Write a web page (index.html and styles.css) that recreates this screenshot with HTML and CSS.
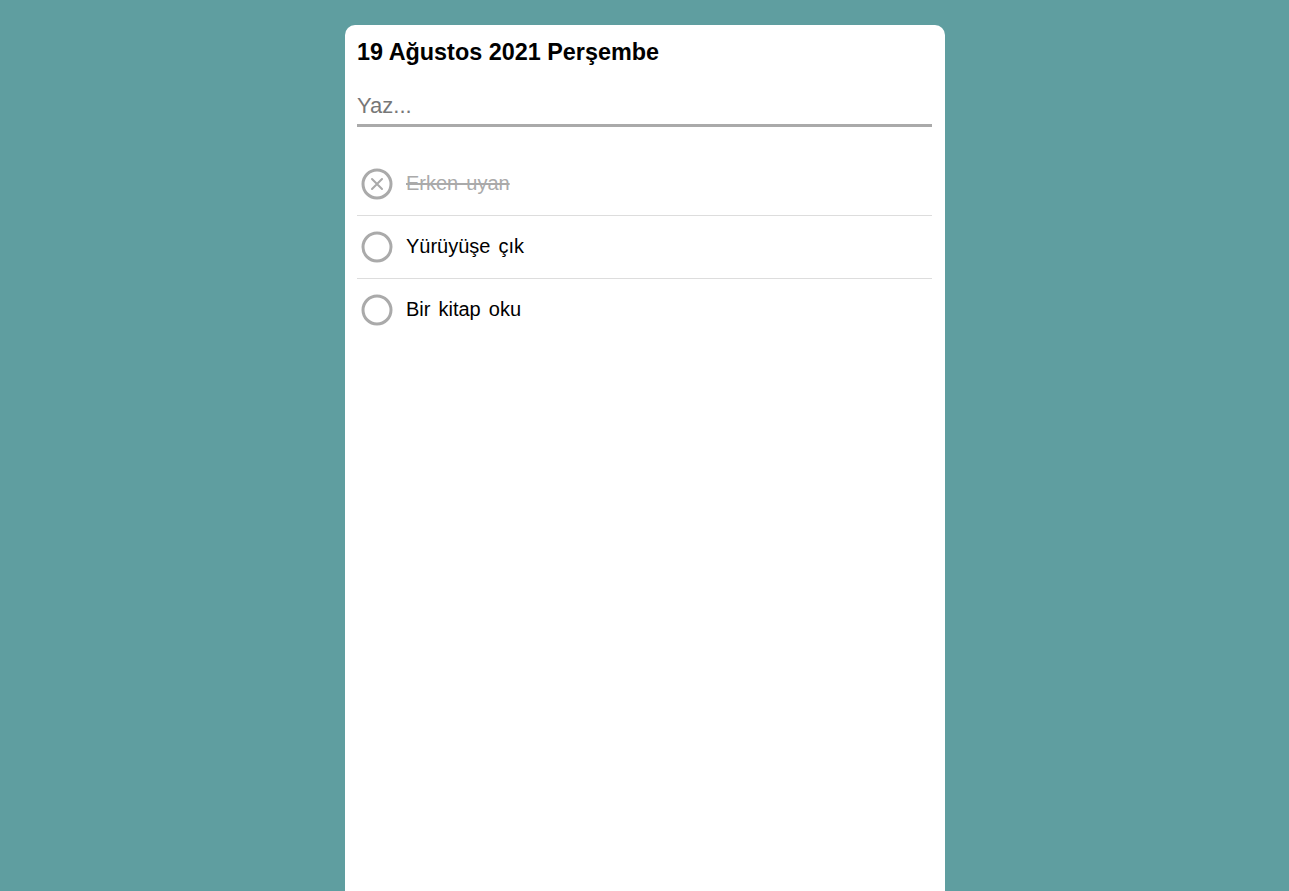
FILE: index.html
```html
<!DOCTYPE html>
<html lang="tr">
<head>
<meta charset="utf-8">
<link rel="stylesheet" href="styles.css">
</head>
<body>
<div class="card">
  <h1 class="title">19 Ağustos 2021 Perşembe</h1>
  <input class="entry" type="text" placeholder="Yaz...">
  <ul class="list">
    <li class="item done">
      <svg class="check" width="32" height="32" viewBox="0 0 32 32"><circle cx="16" cy="16" r="14" fill="none" stroke="#aaa" stroke-width="3"/><path d="M11 11 L21 21 M21 11 L11 21" stroke="#aaa" stroke-width="2" stroke-linecap="round"/></svg>
      <span class="label">Erken uyan</span>
    </li>
    <li class="item">
      <svg class="check" width="32" height="32" viewBox="0 0 32 32"><circle cx="16" cy="16" r="14" fill="none" stroke="#aaa" stroke-width="3"/></svg>
      <span class="label">Yürüyüşe çık</span>
    </li>
    <li class="item">
      <svg class="check" width="32" height="32" viewBox="0 0 32 32"><circle cx="16" cy="16" r="14" fill="none" stroke="#aaa" stroke-width="3"/></svg>
      <span class="label">Bir kitap oku</span>
    </li>
  </ul>
</div>
</body>
</html>
```
FILE: styles.css
```css
html, body {
  margin: 0;
  padding: 0;
  height: 100%;
}
body {
  background: #5f9ea0;
  font-family: "Liberation Sans", Arial, sans-serif;
  overflow: hidden;
}
.card {
  width: 576px;
  margin: 25px auto 0;
  background: #fff;
  border-radius: 10px 10px 0 0;
  padding: 13px 12px 0;
  height: 853px;
  position: relative;
  left: 0.5px;
}
.title {
  margin: 0;
  font-size: 23.4px;
  font-weight: bold;
  line-height: 28px;
  color: #000;
}
.entry {
  display: block;
  box-sizing: border-box;
  width: 575px;
  margin-top: 25px;
  border: none;
  border-bottom: 3px solid #aaa;
  padding: 2px 0 5px;
  font-family: "Liberation Sans", Arial, sans-serif;
  font-size: 22px;
  line-height: 26px;
  outline: none;
  color: #000;
}
.entry::placeholder {
  color: #777;
}
.list {
  list-style: none;
  margin: 26px 0 0;
  padding: 0;
  width: 575px;
}
.item {
  display: flex;
  align-items: center;
  height: 62px;
  border-bottom: 1px solid #ddd;
  padding-left: 4px;
  font-size: 20px;
  word-spacing: 2.5px;
}
.item:last-child {
  border-bottom: none;
}
.check {
  flex: none;
  margin-right: 13px;
}
.label {
  color: #000;
  margin-bottom: 2px;
}
.done .label {
  color: #aaa;
  text-decoration: line-through;
}
```
